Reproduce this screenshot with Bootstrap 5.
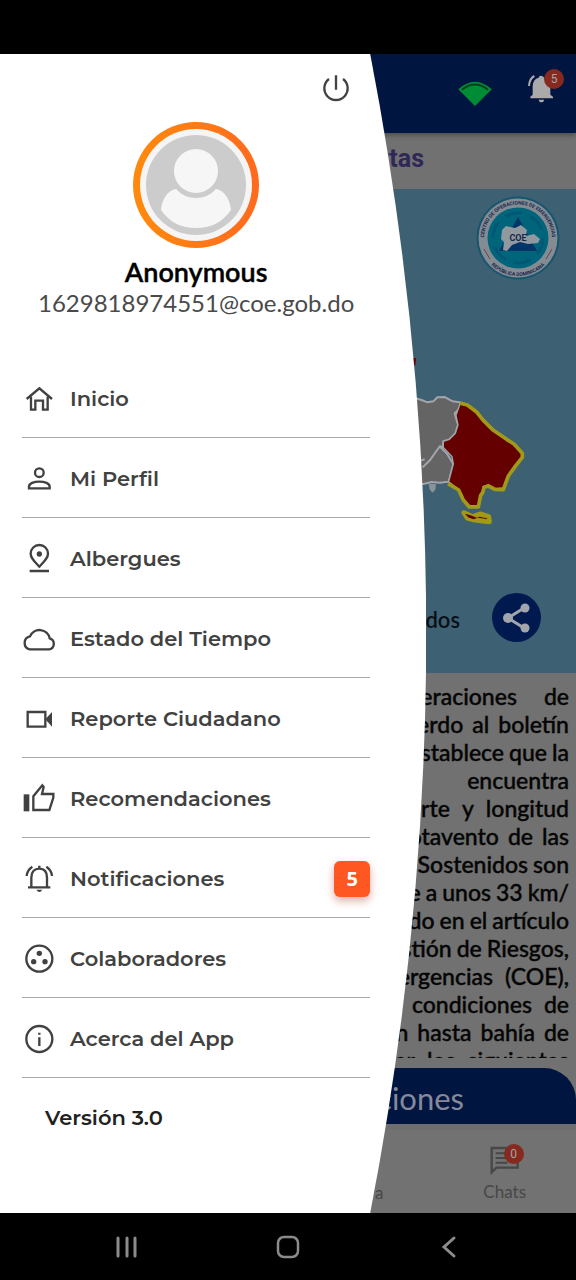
<!DOCTYPE html>
<html lang="es">
<head>
<meta charset="utf-8">
<meta name="viewport" content="width=device-width, initial-scale=1">
<title>COE</title>
<link href="https://cdn.jsdelivr.net/npm/bootstrap@5.3.0/dist/css/bootstrap.min.css" rel="stylesheet">
<style>
  body { font-family: Lato, "Open Sans", sans-serif; background: #000; }
  button { background: none; border: 0; padding: 0; color: inherit; }
  .status-strip { height: 54px; }
  .stage { display: grid; grid-template-columns: minmax(0, 1fr); }
  .stage > * { grid-area: 1 / 1; }

  /* dimmed home screen */
  .home { background: #707170; color: #050505; }
  .topbar { height: 79px; padding: 0 14px 10px 0; background: #001540; gap: 24px; box-shadow: 0 2px 5px rgba(0,0,0,.35); z-index: 1; }
  .topbar svg { display: block; }
  .wifi { margin-top: 10px; }
  .count { position: absolute; top: -2px; right: -2px; width: 20px; height: 20px; border-radius: 50%; background: #862a20; color: #a5a5a5; font: 400 12px/20px Roboto, sans-serif; text-align: center; }
  .section-title { height: 56px; padding-right: 152px; font: 700 25px/52px Roboto, sans-serif; color: #2f2757; }
  .map-area { background: #3e6073; height: 484px; padding: 7px 16px 0 0; }
  .territory { margin: 60px -16px 13px 0; }
  .legend { gap: 32px; padding: 0 19px 0 0; font-size: 22px; font-weight: 600; color: #081016; }
  .legend span { padding-top: 4px; }
  .share { width: 49px; height: 49px; border-radius: 50%; background: #001a50; }
  .bulletin { height: 0; padding: 9px 7px 0 0; font-size: 23px; line-height: 28px; font-weight: 500; -webkit-text-stroke: .4px #050505; }
  .bulletin p { display: flex; justify-content: flex-end; gap: 5px; margin: 0; white-space: nowrap; }
  .bulletin p.loose { gap: 9px; }
  .bulletin p.looser { gap: 12px; }
  .bulletin p.loosest { gap: 27px; }
  .cta { height: 56px; margin-top: 10px; padding-right: 112px; border-radius: 0 32px 0 0; background: #001540; color: #85899a; font-size: 31px; line-height: 60px; text-align: right; }
  .tabs { height: 89px; padding: 16px 0 0; color: #474747; font-size: 17px; background: #727272; border-top: 6px solid #6d6e6d; }
  .tabs a { color: inherit; text-decoration: none; }
  .tab-side { padding-right: 50px; gap: 7px; }
  .tab-mid { padding: 34px 100px 0 0; }

  /* drawer */
  .drawer { position: relative; width: 74%; padding: 0 56px 0 22px; z-index: 2; }
  .drawer-shape { position: absolute; inset: 0; width: 100%; height: 100%; z-index: -1; }
  .power-row { height: 68px; padding-right: 18px; }
  .profile-name { margin-top: 8px; font-size: 27px; line-height: 32px; font-weight: 600; color: #000; -webkit-text-stroke: .4px #000; }
  .profile-mail { font-size: 24px; line-height: 30px; color: #4a4a4a; white-space: nowrap; }
  .menu { margin-top: 40px; font-family: Montserrat, Inter, sans-serif; font-size: 21px; font-weight: 600; }
  .menu a { height: 80px; gap: 15px; padding: 2px 0 0 1px; color: #414141; text-decoration: none; border-bottom: 1px solid #a8a8a8; }
  .menu svg { width: 32px; height: 32px; overflow: visible; fill: none; stroke: #414141; stroke-width: 7; flex: none; }
  .menu .solid { fill: #414141; stroke: none; }
  .alert-count { width: 36px; height: 36px; border-radius: 6px; background: #ff5722; color: #fff; font: 700 20px/36px "Open Sans", sans-serif; text-align: center; box-shadow: 0 4px 8px rgba(190,50,30,.4); }
  .version { margin: 24px 0 0 23px; font: 600 21px/32px Montserrat, Inter, sans-serif; color: #212121; }

  .sysnav { height: 67px; padding: 0 47px; }
</style>
</head>
<body class="d-flex flex-column min-vh-100">
<div class="status-strip"></div>

<main class="stage flex-grow-1">
  <div class="home d-flex flex-column">
    <header class="topbar d-flex justify-content-end align-items-center flex-shrink-0">
      <svg class="wifi" width="48" height="34" viewBox="282 82 144 102" role="img" aria-label="Conectado"><path fill="#008c35" d="M295 119Q345 74 395 119L345 169Z"/><path d="M306 120Q345 89 384 120" fill="none" stroke="#00421f" stroke-width="6"/></svg>
      <button type="button" class="position-relative" aria-label="Notificaciones">
        <svg width="36" height="36" viewBox="500 62 108 108"><path fill="#aaa" d="M513 144V139L520 133V107Q521 86 538 82Q538 76 546 76Q553 77 554 82Q571 86 573 107V133L581 139V144ZM538 148H555Q553 156 546 156Q539 156 538 148Z"/><path d="M509 107Q510 85 525 77" fill="none" stroke="#aaa" stroke-width="6"/></svg>
        <span class="count">5</span>
      </button>
    </header>
    <h1 class="section-title text-end m-0 flex-shrink-0">Alertas</h1>

    <section class="map-area d-flex flex-column align-items-end flex-shrink-0">
      <svg width="84" height="84" viewBox="0 0 84 84" role="img" aria-label="COE">
        <defs>
          <path id="ringTop" d="M10 54A34 34 0 1 1 74 54"/>
          <path id="ringLow" d="M4 42A38 38 0 0 0 80 42"/>
        </defs>
        <circle cx="42" cy="42" r="41.500" fill="#17556f"/>
        <circle cx="42" cy="42" r="39.500" fill="#848c93"/>
        <circle cx="42" cy="42" r="30.500" fill="#00657b"/>
        <circle cx="42" cy="42" r="25" fill="none" stroke="#004c6d" stroke-width="3" stroke-dasharray="17 9" opacity=".5"/>
        <path d="M42 21L61 55H23Z" fill="#003568"/>
        <path fill="#9099a0" d="M26 34L30 30L39 32L45 29L51 34L50 40L58 38L64 43L62 47L52 48L44 46L36 49L31 55L27 54L28 46L25 43Z"/>
        <g font-family="Roboto, sans-serif" font-weight="700" text-anchor="middle" fill="#18274c">
          <text x="42" y="45" font-size="9">COE</text>
          <text font-size="5"><textPath href="#ringTop" startOffset="50%">CENTRO DE OPERACIONES DE EMERGENCIAS</textPath></text>
          <text font-size="5"><textPath href="#ringLow" startOffset="50%">REPÚBLICA DOMINICANA</textPath></text>
        </g>
        <path d="M8 53L14 63M76 53L70 63" stroke="#70404c"/>
      </svg>

      <svg class="territory" width="196" height="240" viewBox="0 0 588 720" role="img" aria-label="Mapa de alertas">
        <path d="M92 54H108L106 74L100 80H92Z" fill="#650000"/>
        <path d="M90 170L125 180L142 187L160 184L172 172L194 171L218 184L240 187L245 200L224 220L234 255L226 280L208 298L190 304L188 322L178 318L200 340L220 372L206 425L180 428L155 426L130 432H90Z" fill="#646464" stroke="#a2a5aa" stroke-width="6"/>
        <path d="M180 318L150 360L128 382M120 362L134 358" fill="none" stroke="#a2a5aa" stroke-width="6"/>
        <path d="M146 432H168L166 450L157 458L149 448Z" fill="#8b9299"/>
        <path d="M240 192L262 197L290 218L310 243L338 271L380 300L402 314L425 340V352L408 376L385 408L370 444L345 446L325 434L310 440L307 458L300 466L295 497H268L250 478L236 448L206 425L220 372L216 350L190 322V304L208 298L226 280L234 255L228 226Z" fill="#650000" stroke="#a2a5aa" stroke-width="4"/>
        <path d="M240 189L262 195L290 216L310 241L338 269L380 298L402 312L427 340V352L408 376L385 408L370 449L345 448L325 438L312 442L308 458L302 466L295 501H268L250 480L236 450L204 431" fill="none" stroke="#a19a16" stroke-width="11" stroke-linejoin="round"/>
        <path d="M252 518L278 530L300 522L326 530L328 545L285 540L262 534Z" fill="#650000" stroke="#a19a16" stroke-width="15" stroke-linejoin="round"/>
        <path d="M255 521L272 526L292 534L280 538L264 532ZM308 533L320 534L320 538Z" fill="#650000"/>
      </svg>

      <div class="legend d-flex align-items-center">
        <span>dos</span>
        <button type="button" class="share d-flex align-items-center justify-content-center" aria-label="Compartir">
          <svg width="30" height="32" viewBox="0 0 30 32"><path d="M22 6L6 16L22 26" fill="none" stroke="#a2a5ac" stroke-width="3"/><g fill="#a2a5ac"><circle cx="23" cy="6" r="4.500"/><circle cx="6" cy="16" r="5"/><circle cx="23" cy="26" r="4.500"/></g></svg>
        </button>
      </div>
    </section>

    <section class="bulletin flex-grow-1 overflow-hidden">
      <p class="loosest"><span>Operaciones</span><span>de</span></p>
      <p class="loose"><span>acuerdo</span><span>al</span><span>boletín</span></p>
      <p><span>establece</span><span>que</span><span>la</span></p>
      <p><span>encuentra</span></p>
      <p class="looser"><span>Norte</span><span>y</span><span>longitud</span></p>
      <p class="loose"><span>Sotavento</span><span>de</span><span>las</span></p>
      <p><span>Sostenidos</span><span>son</span></p>
      <p><span>de</span><span>a</span><span>unos</span><span>33</span><span>km/</span></p>
      <p><span>do</span><span>en</span><span>el</span><span>artículo</span></p>
      <p><span>Gestión</span><span>de</span><span>Riesgos,</span></p>
      <p class="looser"><span>Emergencias</span><span>(COE),</span></p>
      <p class="looser"><span>condiciones</span><span>de</span></p>
      <p class="loose"><span>n</span><span>hasta</span><span>bahía</span><span>de</span></p>
      <p class="looser"><span>der</span><span>los</span><span>siguientes</span></p>
    </section>
    <button type="button" class="cta flex-shrink-0">Recomendaciones</button>
    <nav class="tabs d-flex justify-content-end flex-shrink-0">
      <a href="#" class="tab-mid">a</a>
      <a href="#" class="tab-side d-flex flex-column align-items-center lh-1">
        <span class="position-relative d-block">
          <svg class="d-block" width="34" height="30" viewBox="382 739 102 90"><path d="M393 745H471V804H407L393 818Z" fill="none" stroke="#474747" stroke-width="7"/><path d="M405 761H458M405 775H458M405 789H440" stroke="#474747" stroke-width="6"/></svg>
          <span class="count">0</span>
        </span>
        <span>Chats</span>
      </a>
    </nav>
  </div>

  <aside class="drawer">
    <svg class="drawer-shape" viewBox="0 0 426 1159" preserveAspectRatio="none" aria-hidden="true"><path fill="#fff" d="M0 0H370Q482 580 370 1159H0Z"/></svg>
    <div class="power-row d-flex justify-content-end align-items-center">
      <button type="button" aria-label="Cerrar sesión">
        <svg class="d-block" width="32" height="32" viewBox="960 66 96 96" fill="none" stroke="#424242" stroke-width="7"><path d="M1008 76V119M987 87A35 35 0 1 0 1029 87"/></svg>
      </button>
    </div>
    <div class="text-center d-flex flex-column align-items-center">
      <svg width="126" height="126" viewBox="0 0 126 126" role="img" aria-label="Foto de perfil">
        <defs><linearGradient id="ring"><stop stop-color="#ff8a0c"/><stop offset="1" stop-color="#ff6a1e"/></linearGradient></defs>
        <circle cx="63" cy="63" r="63" fill="url(#ring)"/>
        <circle cx="63" cy="63" r="56" fill="#f5f5f5"/>
        <circle cx="63" cy="63" r="50" fill="#ccc"/>
        <circle cx="63" cy="49" r="22" fill="#f6f6f6"/>
        <path fill="#f6f6f6" d="M43 67C35 68 29 77 28 88C37 101 49 106 63 106S89 101 98 88C97 77 91 68 83 67Q75 76 63 76T43 67Z"/>
      </svg>
      <div class="profile-name">Anonymous</div>
      <div class="profile-mail">1629818974551@coe.gob.do</div>
    </div>
    <nav class="menu">
      <a href="#" class="d-flex align-items-center"><svg viewBox="69 39 96 96"><path d="M80 87L118 55L156 87M93 80V119H106V92H129V119H143V80"/></svg>Inicio</a>
      <a href="#" class="d-flex align-items-center"><svg viewBox="69 279 96 96"><circle cx="118" cy="308" r="13"/><path d="M87 355V350C87 340 102 335 118 335S149 340 149 350V355Z"/></svg>Mi Perfil</a>
      <a href="#" class="d-flex align-items-center"><svg viewBox="69 519 96 96"><path d="M118 590C103 574 92 564 92 551A26 26 0 0 1 144 551C144 564 133 574 118 590ZM89 603H147"/><circle class="solid" cx="118" cy="552" r="8"/></svg>Albergues</a>
      <a href="#" class="d-flex align-items-center"><svg viewBox="69 36 96 96"><path d="M89 115H148A17 17 0 0 0 149 82A31 31 0 0 0 90 76A20 20 0 0 0 89 115Z"/></svg>Estado del Tiempo</a>
      <a href="#" class="d-flex align-items-center"><svg viewBox="69 276 96 96"><path d="M83 303H136V347H83Z"/><path class="solid" d="M136 325L156 303V347Z"/></svg>Reporte Ciudadano</a>
      <a href="#" class="d-flex align-items-center"><svg viewBox="69 516 96 96"><path class="solid" d="M71 550H88V601H71Z"/><path d="M100 556L127 523L131 528L126 549H160V560L148 597H100Z"/></svg>Recomendaciones</a>
      <a href="#" class="d-flex align-items-center"><svg viewBox="69 66 96 96"><path d="M94 137V110C94 92 104 83 118 83S141 92 141 110V137M84 139H151M118 74V82M80 105C81 93 86 84 97 77M156 105C155 93 150 84 139 77"/><path class="solid" d="M109 146H127Q118 160 109 146Z"/></svg>Notificaciones<span class="alert-count ms-auto">5</span></a>
      <a href="#" class="d-flex align-items-center"><svg viewBox="69 306 96 96"><circle cx="118" cy="353" r="39"/><g class="solid"><circle cx="118" cy="337" r="8"/><circle cx="101" cy="362" r="8"/><circle cx="135" cy="362" r="8"/></g></svg>Colaboradores</a>
      <a href="#" class="d-flex align-items-center"><svg viewBox="69 545 96 96"><circle cx="118" cy="593" r="39"/><path d="M118 574V580M118 588V614"/></svg>Acerca del App</a>
    </nav>
    <div class="version">Versión 3.0</div>
  </aside>
</main>

<nav class="sysnav d-flex align-items-center justify-content-around">
  <button type="button" aria-label="Recientes"><svg class="d-block" width="24" height="24" viewBox="0 0 24 24" stroke="#8b8b8b" stroke-width="3" stroke-linecap="round"><path d="M3 3V21M12 3V21M20 3V21"/></svg></button>
  <button type="button" aria-label="Inicio"><svg class="d-block" width="24" height="24" viewBox="0 0 24 24"><rect x="2" y="2" width="20" height="20" rx="6" fill="none" stroke="#8b8b8b" stroke-width="2.500"/></svg></button>
  <button type="button" aria-label="Atrás"><svg class="d-block" width="24" height="24" viewBox="0 0 24 24" fill="none" stroke="#8b8b8b" stroke-width="3" stroke-linecap="round"><path d="M17 3L7 12L17 21"/></svg></button>
</nav>
<script src="https://cdn.jsdelivr.net/npm/bootstrap@5.3.0/dist/js/bootstrap.bundle.min.js"></script>
</body>
</html>
